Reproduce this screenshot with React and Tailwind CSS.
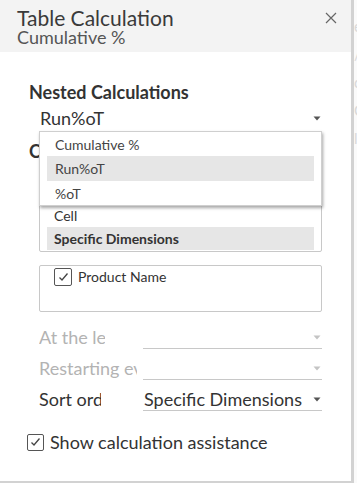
import React from "react";

const Arrow = ({ className = "" }) => (
  <svg width="8" height="5" viewBox="0 0 8 5" className={className}>
    <path d="M0.5 0.5 L7.5 0.5 L4 4.5 Z" fill="currentColor" />
  </svg>
);

const Check = ({ className = "" }) => (
  <div
    className={`flex items-center justify-center border border-[#555] rounded-[2px] bg-white ${className}`}
  >
    <svg width="11" height="10" viewBox="0 0 11 10">
      <path d="M1.5 5.5 L4 8 L9.5 1.5" fill="none" stroke="#444" strokeWidth="1.3" />
    </svg>
  </div>
);

const FieldRow = ({ label, labelW, value, muted }) => (
  <div className="flex items-start h-[31px] pl-[39px] pr-[29px]">
    <div
      className={`overflow-hidden whitespace-nowrap text-[18px] leading-[31px] ${
        muted ? "text-[#b3b3b3]" : "text-[#333]"
      }`}
      style={{ width: labelW }}
    >
      {label}
    </div>
    <div
      className={`ml-auto w-[179px] h-[22px] mt-[5px] flex items-center border-b border-[#c8c8c8] ${
        muted ? "text-[#c4c4c4]" : "text-[#555]"
      }`}
    >
      <span className="pl-[1px] text-[18px] leading-[21px] text-[#333] whitespace-nowrap">{value}</span>
      <Arrow className="ml-auto mr-[1px]" />
    </div>
  </div>
);

export default function App() {
  return (
    <div
      className="relative w-[357px] h-[486px] bg-white flex text-[#333]"
      style={{ fontFamily: "Lato, 'Noto Sans', sans-serif" }}
    >
      <div className="w-[354px] h-[483px] flex flex-col bg-white border-r-[3px] border-b-[2px] border-[#d2d2d2]">
        {/* Header */}
        <div className="h-[52px] shrink-0 bg-[#f3f3f3] flex pl-[17px] pr-[14px] pt-[8px]">
          <div className="flex flex-col">
            <div className="text-[21px] leading-[20px] text-[#3a3a3a]">Table Calculation</div>
            <div className="text-[18px] leading-[18px] text-[#555]">Cumulative %</div>
          </div>
          <svg width="12" height="12" viewBox="0 0 12 12" className="ml-auto mt-[4px]">
            <path d="M1 1 L11 11 M11 1 L1 11" stroke="#666" strokeWidth="1.2" />
          </svg>
        </div>

        {/* Nested calculations */}
        <div className="relative pt-[29px]">
          <div className="pl-[29px] text-[18px] font-bold leading-[22px]">Nested Calculations</div>
          <div className="flex items-center h-[24px] pl-[39px] pr-[29px] mt-[3px] text-[#555]">
            <span className="pl-[1px] text-[18px] text-[#333]">Run%oT</span>
            <Arrow className="ml-auto mr-[1px]" />
          </div>

          <div className="pl-[29px] mt-[10px] text-[18px] font-bold leading-[22px]">Compute Using</div>

          <div className="ml-[39px] mr-[29px] mt-[1px] h-[89px] border border-[#c8c8c8] rounded-[2px] px-[7px] pb-[1px] flex flex-col justify-end overflow-hidden text-[14px]">
            <div className="h-[24px] shrink-0 flex items-center px-[7px]">Pane (down)</div>
            <div className="h-[24px] shrink-0 flex items-center px-[7px]">Cell</div>
            <div className="h-[23px] shrink-0 flex items-center px-[7px] bg-[#e6e6e6] font-bold">
              Specific Dimensions
            </div>
          </div>

          <div className="ml-[39px] mr-[29px] mt-[13px] h-[47px] border border-[#c8c8c8] rounded-[2px] pl-[14px] pt-[2px] flex items-start">
            <Check className="w-[18px] h-[18px]" />
            <span className="ml-[6px] text-[14px] leading-[18px]">Product Name</span>
          </div>

          {/* Popup menu */}
          <div className="absolute left-[39px] top-[79px] w-[283px] h-[75px] bg-white border border-[#cfcfcf] shadow-[1px_2px_3px_rgba(0,0,0,0.35)] px-[7px] text-[14px] text-[#444]">
            <div className="h-[24px] flex items-center px-[8px]">Cumulative %</div>
            <div className="h-[25px] flex items-center px-[8px] bg-[#e6e6e6]">Run%oT</div>
            <div className="h-[24px] flex items-center px-[8px]">%oT</div>
          </div>
        </div>

        {/* Fields */}
        <div className="mt-[10px]">
          <FieldRow label="At the level" labelW={66} value="" muted />
          <FieldRow label="Restarting every" labelW={98} value="" muted />
          <FieldRow label="Sort order" labelW={62} value="Specific Dimensions" />
        </div>

        <div className="flex items-center h-[20px] pl-[27px] mt-[17px]">
          <Check className="w-[17px] h-[17px]" />
          <span className="ml-[6px] text-[18px] text-[#333]">Show calculation assistance</span>
        </div>
      </div>

      {/* Background app strip */}
      <div className="flex-1 h-[483px] bg-[#fafafa] overflow-hidden text-[15px] text-[#d9d9d9] leading-[28px] pt-[12px] flex flex-col">
        <span>e</span>
        <span>/</span>
        <span>c</span>
        <span>C</span>
        <span>l</span>
      </div>
    </div>
  );
}
